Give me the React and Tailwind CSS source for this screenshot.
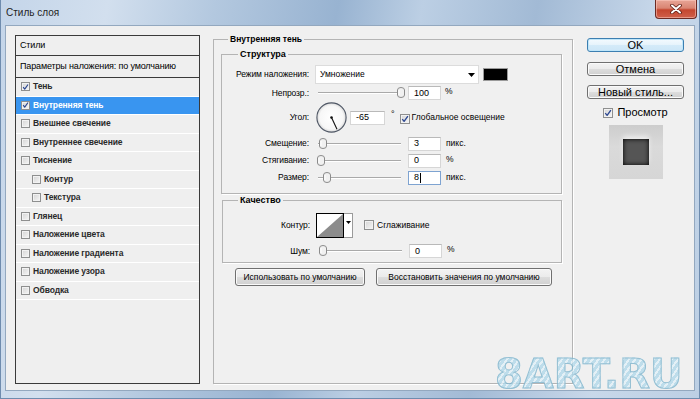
import React from "react";

function CheckBox({ checked = false, small = false }) {
  return (
    <span
      className={`inline-flex shrink-0 items-center justify-center border border-[#8e8f8f] bg-[linear-gradient(135deg,#d4d4d4,#f6f6f6)] shadow-[inset_0_0_0_1px_#f2f2f2] ${
        small ? "w-[9px] h-[9px]" : "w-[10px] h-[10px]"
      }`}
    >
      {checked && (
        <svg viewBox="0 0 10 10" className="w-[8px] h-[8px]">
          <path d="M1.6 5.2 L3.9 7.9 L8.6 1.4" fill="none" stroke="#2c4791" strokeWidth="1.7" strokeLinejoin="round" />
        </svg>
      )}
    </span>
  );
}

function Slider({ pos }) {
  return (
    <div className="relative w-[87px] h-[12px] flex items-center shrink-0">
      <div className="ml-[2px] w-[83px] h-[2px] border-t border-[#a9a9a9] border-b border-b-white" />
      <svg width="8" height="11" viewBox="0 0 8 11" className="absolute top-[0px]" style={{ left: pos }}>
        <path d="M0.5 3 Q0.5 0.5 4 0.5 Q7.5 0.5 7.5 3 V8 Q7.5 10.5 4 10.5 Q0.5 10.5 0.5 8 Z" fill="#f1f1f1" stroke="#8b8b8b" />
        <path d="M2 3 V8" stroke="#ffffff" />
      </svg>
    </div>
  );
}

function NumBox({ value, focus = false, w = "w-[33px]" }) {
  return (
    <div
      className={`${w} h-[14px] shrink-0 bg-white border ${
        focus ? "border-[#7ea3d1]" : "border-[#d6d6d6] border-t-[#b9b9b9]"
      } flex items-center pl-[5px] text-[9px] leading-none`}
    >
      {value}
      {focus && <span className="ml-[1px] w-[1px] h-[10px] bg-black" />}
    </div>
  );
}

function Label({ children }) {
  return (
    <span className="w-[88px] shrink-0 text-right text-[8.5px] tracking-[-0.1px] leading-none pr-[1px]">{children}</span>
  );
}

function Btn({ children, className = "", def = false }) {
  return (
    <div
      className={`flex items-center justify-center rounded-[3px] border ${
        def
          ? "border-[#3c7fb1] bg-[linear-gradient(#f4fafe,#e6f3fb_50%,#d4ebf9_51%,#cde6f7)] shadow-[inset_0_0_0_1px_#bfe6fa]"
          : "border-[#707070] bg-[linear-gradient(#f3f3f3,#ebebeb_50%,#dddddd_51%,#d0d0d0)] shadow-[inset_0_0_0_1px_#fafafa]"
      } ${className}`}
    >
      {children}
    </div>
  );
}

const items = [
  { t: "Тень", c: true },
  { t: "Внутренняя тень", c: true, sel: true },
  { t: "Внешнее свечение" },
  { t: "Внутреннее свечение" },
  { t: "Тиснение" },
  { t: "Контур", ind: true },
  { t: "Текстура", ind: true },
  { t: "Глянец" },
  { t: "Наложение цвета" },
  { t: "Наложение градиента" },
  { t: "Наложение узора" },
  { t: "Обводка" },
];

export default function App() {
  return (
    <div className="relative w-[700px] h-[399px] overflow-hidden whitespace-nowrap border-x border-b border-[#6f8cae] bg-[linear-gradient(100deg,#c4d5e9_0%,#d2dfee_14%,#b3c8df_28%,#98b3d1_44%,#bccfe4_55%,#a2bad5_70%,#c8d8ea_86%,#bccfe4_100%)] font-['Liberation_Sans',Arial,sans-serif] text-black">
      {/* title bar */}
      <div className="h-[25px] flex items-start justify-between pr-[2px]">
        <span className="pl-[5px] pt-[6px] text-[10px] leading-[13px] text-[#1e1e1e]">Стиль слоя</span>
        <div className="w-[42px] h-[19px] rounded-b-[4px] border border-t-0 border-[#6b2a23] bg-[linear-gradient(#e8a596,#d98573_45%,#c4462f_55%,#d0604a)] shadow-[inset_0_0_0_1px_rgba(255,210,200,0.5)] flex items-center justify-center">
          <svg width="12" height="10" viewBox="0 0 12 10">
            <path d="M2 1.5 L10 8.5 M10 1.5 L2 8.5" stroke="#5a1a12" strokeWidth="3.6" strokeLinecap="round" />
            <path d="M2 1.5 L10 8.5 M10 1.5 L2 8.5" stroke="#ffffff" strokeWidth="2" strokeLinecap="round" />
          </svg>
        </div>
      </div>

      {/* client area */}
      <div className="mx-[4px] h-[366px] border border-[#93a8bf] bg-[#f0f0f0] flex items-start pl-[9px]">
        {/* list */}
        <div className="mt-[9px] w-[185px] h-[349px] border border-[#3a3a3a] bg-[#efefef] flex flex-col">
          <div className="h-[20px] shrink-0 border-b border-[#3a3a3a] flex items-center pl-[4px] text-[9px] tracking-[-0.15px]">Стили</div>
          <div className="h-[22px] shrink-0 border-b border-[#3a3a3a] flex items-center pl-[4px] text-[9px] tracking-[-0.15px]">
            Параметры наложения: по умолчанию
          </div>
          {items.map((it) => (
            <div
              key={it.t}
              className={`h-[18.5px] shrink-0 border-b border-white flex items-center gap-[3px] font-bold text-[8.5px] tracking-[-0.1px] ${
                it.ind ? "pl-[16px]" : "pl-[5px]"
              } ${it.sel ? "bg-[#3995f0] text-white" : "text-[#2a2a2a]"}`}
            >
              <CheckBox checked={it.c} small />
              <span>{it.t}</span>
            </div>
          ))}
        </div>

        {/* middle */}
        <fieldset className="ml-[13px] mt-[7px] w-[360px] h-[351px] min-w-0 border border-[#b4b4b4] shadow-[1px_1px_0_#fff]">
          <legend className="ml-[14px] px-[2px] text-[8.5px] leading-[12px] font-bold">Внутренняя тень</legend>
          <fieldset className="ml-[7px] mt-[3px] w-[341px] h-[146px] min-w-0 border border-[#b4b4b4] shadow-[1px_1px_0_#fff]">
            <legend className="ml-[16px] px-[2px] text-[9px] leading-[12px] font-bold">Структура</legend>
            <div className="mt-[5px] h-[19px] flex items-center">
              <Label>Режим наложения:</Label>
              <div className="ml-[5px] w-[164px] h-[19px] bg-white border border-[#dcdcdc] flex items-center justify-between pl-[4px] pr-[3px] text-[8.5px]">
                <span>Умножение</span>
                <svg width="7" height="4" viewBox="0 0 7 4">
                  <path d="M0 0 H7 L3.5 4 Z" fill="#000" />
                </svg>
              </div>
              <div className="ml-[4px] w-[25px] h-[13px] bg-black border border-[#9a9a9a]" />
            </div>
            <div className="h-[18px] flex items-center">
              <Label>Непрозр.:</Label>
              <div className="ml-[6px]">
                <Slider pos={81} />
              </div>
              <div className="ml-[5px]">
                <NumBox value="100" />
              </div>
              <span className="ml-[4px] -mt-[3px] text-[8.5px] leading-none">%</span>
            </div>
            <div className="h-[31px] flex items-center">
              <Label>Угол:</Label>
              <svg width="31" height="31" viewBox="0 0 31 31" className="ml-[6px] shrink-0">
                <defs>
                  <radialGradient id="dial" cx="50%" cy="50%" r="50%">
                    <stop offset="0%" stopColor="#ffffff" />
                    <stop offset="80%" stopColor="#f7f7f7" />
                    <stop offset="100%" stopColor="#d9d9d9" />
                  </radialGradient>
                </defs>
                <circle cx="15.5" cy="15.5" r="14.6" fill="url(#dial)" stroke="#4e5664" strokeWidth="1.1" />
                <line x1="15.5" y1="15.5" x2="21" y2="27.3" stroke="#111" strokeWidth="1.1" />
                <circle cx="15.5" cy="15.5" r="1.3" fill="#111" />
              </svg>
              <div className="ml-[3px]">
                <NumBox value="-65" w="w-[35px]" />
              </div>
              <span className="ml-[6px] -mt-[6px] text-[9px] leading-none">°</span>
              <span className="ml-[5px]">
                <CheckBox checked />
              </span>
              <span className="ml-[2px] text-[8.5px] leading-none">Глобальное освещение</span>
            </div>
            <div className="mt-[2px] h-[17px] flex items-center">
              <Label>Смещение:</Label>
              <div className="ml-[6px]">
                <Slider pos={3} />
              </div>
              <div className="ml-[5px]">
                <NumBox value="3" />
              </div>
              <span className="ml-[5px] text-[8.5px] leading-none">пикс.</span>
            </div>
            <div className="h-[17px] flex items-center">
              <Label>Стягивание:</Label>
              <div className="ml-[6px]">
                <Slider pos={1} />
              </div>
              <div className="ml-[5px]">
                <NumBox value="0" />
              </div>
              <span className="ml-[5px] -mt-[3px] text-[8.5px] leading-none">%</span>
            </div>
            <div className="h-[17px] flex items-center">
              <Label>Размер:</Label>
              <div className="ml-[6px]">
                <Slider pos={7} />
              </div>
              <div className="ml-[5px]">
                <NumBox value="8" focus />
              </div>
              <span className="ml-[5px] text-[8.5px] leading-none">пикс.</span>
            </div>
          </fieldset>

          <fieldset className="ml-[8px] w-[340px] h-[69px] min-w-0 border border-[#b4b4b4] shadow-[1px_1px_0_#fff]">
            <legend className="ml-[15px] px-[2px] text-[9px] leading-[12px] font-bold">Качество</legend>
            <div className="mt-[6px] h-[26px] flex items-center">
              <Label>Контур:</Label>
              <div className="ml-[5px] flex h-[25px]">
                <svg width="28" height="25" viewBox="0 0 28 25" className="shrink-0">
                  <rect x="0.5" y="0.5" width="27" height="24" fill="#ffffff" stroke="#000" />
                  <path d="M1 24 L27 1 L27 24 Z" fill="#8c8c8c" />
                </svg>
                <div className="w-[9px] h-[25px] bg-white border border-l-0 border-[#9a9a9a] flex items-start justify-center pt-[7px]">
                  <svg width="5" height="3" viewBox="0 0 5 3">
                    <path d="M0 0 H5 L2.5 3 Z" fill="#000" />
                  </svg>
                </div>
              </div>
              <span className="ml-[11px]">
                <CheckBox />
              </span>
              <span className="ml-[3px] text-[8.5px] leading-none">Сглаживание</span>
            </div>
            <div className="mt-[5px] h-[16px] flex items-center">
              <Label>Шум:</Label>
              <div className="ml-[6px]">
                <Slider pos={2} />
              </div>
              <div className="ml-[5px]">
                <NumBox value="0" />
              </div>
              <span className="ml-[5px] -mt-[3px] text-[8.5px] leading-none">%</span>
            </div>
          </fieldset>

          <div className="mt-[5px] ml-[21px] flex gap-[11px]">
            <Btn className="w-[130px] h-[18px] text-[8.5px]">Использовать по умолчанию</Btn>
            <Btn className="w-[176px] h-[18px] text-[8.5px]">Восстановить значения по умолчанию</Btn>
          </div>
        </fieldset>

        {/* right column */}
        <div className="ml-[14px] w-[97px] flex flex-col items-center text-[11px]">
          <Btn def className="mt-[12px] w-[97px] h-[14px]">OK</Btn>
          <Btn className="mt-[10px] w-[97px] h-[14px]">Отмена</Btn>
          <Btn className="mt-[9px] w-[97px] h-[14px]">Новый стиль...</Btn>
          <div className="mt-[8px] h-[11px] flex items-center gap-[4px]">
            <CheckBox checked />
            <span className="leading-none">Просмотр</span>
          </div>
          <div className="mt-[7px] w-[54px] h-[54px] bg-[linear-gradient(#cdcdcd,#dadada_40%,#d6d6d6)] flex items-center justify-center">
            <div className="w-[26px] h-[26px] bg-[#555555] shadow-[inset_0_0_5px_#000,0_-3px_5px_rgba(255,255,255,0.6)]" />
          </div>
        </div>
      </div>

      {/* watermark */}
      <div className="absolute left-[494px] top-[352px] text-[40px] leading-[44px] font-bold font-['DejaVu_Sans',sans-serif] bg-[repeating-linear-gradient(125deg,#b2d9ea_0px,#b2d9ea_3px,#e2f1f8_3px,#e2f1f8_5px)] bg-clip-text text-transparent [-webkit-text-stroke:1px_#7fb4cc] opacity-80">
        8ART.RU
      </div>
    </div>
  );
}
